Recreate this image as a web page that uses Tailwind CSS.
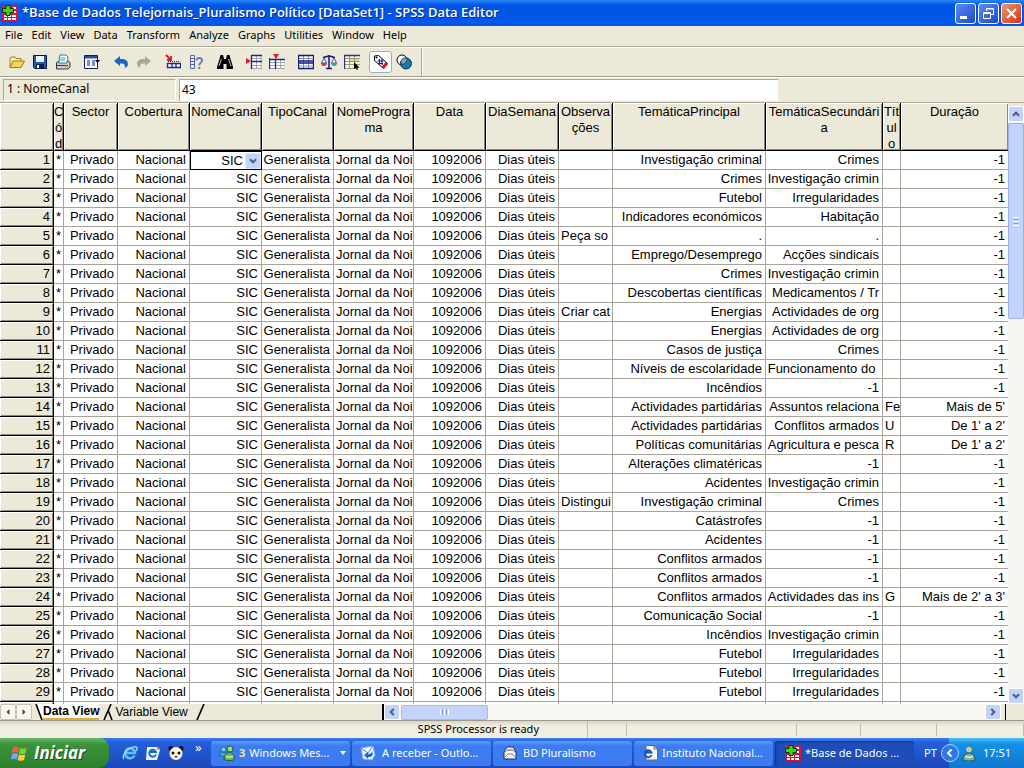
<!DOCTYPE html>
<html lang="pt">
<head>
<meta charset="utf-8">
<title>Base de Dados Telejornais - SPSS Data Editor</title>
<script src="https://cdn.jsdelivr.net/npm/@tailwindcss/browser@4"></script>
</head>
<body class="flex h-screen flex-col overflow-hidden bg-[#ece9d8] font-['Noto_Sans',sans-serif] text-[11px] text-black">

<svg class="hidden" aria-hidden="true">
  <symbol id="spss" viewBox="0 0 16 16">
    <rect width="16" height="16" fill="#d8143c"/>
    <path d="M2 10h3v2H2zM6 10h3v2H6zM10 10h4v2h-4zM2 13h3v2H2zM6 13h3v2H6zM10 13h4v2h-4zM11 6h3v2h-3zM11 2h3v2h-3z" fill="#fff"/>
    <path d="M4 0.500h4v3h3.500v4H8v3H4v-3H0.500v-4H4z" fill="#3fd41c" stroke="#063c06"/>
  </symbol>
  <symbol id="ie" viewBox="0 0 16 16">
    <path d="M12.500 10.500A5 5 0 1 1 13 8H4" fill="none" stroke="#5cc0f8" stroke-width="2.600"/>
    <path d="M2 14C-1 11 7 1 14 2c2 .5 1 3-.5 4" fill="none" stroke="#a4e0ff" stroke-width="1.300"/>
  </symbol>
  <symbol id="up" viewBox="0 0 16 16"><path d="M4.500 10 8 6.500l3.500 3.500" fill="none" stroke="#4d6185" stroke-width="2.400"/></symbol>
  <symbol id="down" viewBox="0 0 16 16"><path d="M4.500 6 8 9.500 11.500 6" fill="none" stroke="#4d6185" stroke-width="2.400"/></symbol>
  <symbol id="left" viewBox="0 0 16 16"><path d="M10 4.500 6.500 8l3.500 3.500" fill="none" stroke="#4d6185" stroke-width="2.400"/></symbol>
  <symbol id="right" viewBox="0 0 16 16"><path d="M6 4.500 9.500 8 6 11.500" fill="none" stroke="#4d6185" stroke-width="2.400"/></symbol>
  <symbol id="buddy" viewBox="0 0 16 16">
    <path d="M2 15c0-4 3-7 6-7s6 3 6 7c-3 1.300-9 1.300-12 0z" fill="#7fb0a4" stroke="#26584c"/>
    <circle cx="8" cy="4.500" r="3.500" fill="#a4d0c4" stroke="#3a7464"/>
    <path d="M4 11c2 1.500 6 1.500 8 0" stroke="#e0f0e8" stroke-width="1.500" fill="none"/>
  </symbol>
  <symbol id="buddies" viewBox="0 0 16 16">
    <circle cx="4.500" cy="4.500" r="2.500" fill="#8ccce8" stroke="#206890"/>
    <path d="M.5 11C.5 8 3 6.500 6 7.500l2 4z" fill="#58a8d0" stroke="#206890"/>
    <circle cx="11" cy="4" r="3" fill="#98d880" stroke="#206030"/>
    <path d="M5 14.500c0-4 2.500-7 5.500-7s5 3 5 7c-3 1.500-8 1.500-10.500 0z" fill="#60b858" stroke="#206030"/>
    <path d="M7 11c2 1.500 5 1.500 7 0" stroke="#d8f4d0" stroke-width="1.500" fill="none"/>
  </symbol>
</svg>

<header class="flex h-[26px] shrink-0 items-center bg-linear-to-b from-[#2a86f8] via-[#0054e3] via-20% to-[#0458ee] px-0.5">
  <svg class="size-4 shrink-0"><use href="#spss"/></svg>
  <h1 class="ml-1 grow whitespace-nowrap font-['Open_Sans',sans-serif] text-[13px] font-semibold text-white [text-shadow:1px_1px_#0a2a80]">*Base de Dados Telejornais_Pluralismo Político [DataSet1] - SPSS Data Editor</h1>
  <div class="flex gap-0.5">
    <button aria-label="Minimize" class="size-[21px] rounded-[3px] border border-white bg-linear-to-br from-[#5a8cf4] to-[#1c48cc]"><svg viewBox="0 0 19 19"><path d="M4 12h7v3H4z" fill="#fff"/></svg></button>
    <button aria-label="Restore" class="size-[21px] rounded-[3px] border border-white bg-linear-to-br from-[#5a8cf4] to-[#1c48cc]"><svg viewBox="0 0 19 19" fill="none" stroke="#fff"><path d="M7.500 7V4.500h7v6H12M7 5h8"/><path d="M4.500 8.500h7v6h-7zM4 9.500h8"/></svg></button>
    <button aria-label="Close" class="size-[21px] rounded-[3px] border border-white bg-linear-to-br from-[#f09070] to-[#cc3010]"><svg viewBox="0 0 19 19"><path d="m5 5 9 9M14 5l-9 9" stroke="#fff" stroke-width="2.200"/></svg></button>
  </div>
</header>

<nav class="flex h-[21px] shrink-0 items-center gap-[9px] border-b border-[#aca899] pl-[5px] pb-0.5">
  <button>File</button><button>Edit</button><button>View</button><button>Data</button><button>Transform</button><button>Analyze</button><button>Graphs</button><button>Utilities</button><button>Window</button><button>Help</button>
</nav>

<div class="flex h-[30px] shrink-0 items-center border-t border-b border-t-white border-b-[#9d9a8c] pl-[5px]">
  <button aria-label="Open" class="flex h-[22px] w-[23px] items-center justify-center"><svg class="size-4" viewBox="0 0 16 16"><path d="M1 13V4l1-1h4l1 1.500h5V7" fill="#fff2a8" stroke="#a07818"/><path d="M1 13.500 4 7h11.500L12 13.500z" fill="#f8d458" stroke="#a07818"/></svg></button>
  <button aria-label="Save" class="flex h-[22px] w-[23px] items-center justify-center"><svg class="size-4" viewBox="0 0 16 16"><path d="M1.500 1.500h13v13h-12l-1-1z" fill="#1c5cb4" stroke="#04145c"/><path d="M4 2h8v6H4z" fill="#e8f4ff"/><path d="M4 10h8v4H4z" fill="#102048"/><path d="M5 11h2v3H5z" fill="#fff"/></svg></button>
  <button aria-label="Print" class="flex h-[22px] w-[23px] items-center justify-center"><svg class="size-4" viewBox="0 0 16 16"><path d="M1.500 8.500 4 7h9l2 1.500V13l-2 2H1.500z" fill="#c8ccd0" stroke="#383c44"/><path d="M5 1h6l2 2-1 6H3.500z" fill="#f0fcff" stroke="#387890"/><path d="M5.500 4h5M5 6h5" stroke="#50a0b0"/><path d="M2 11.500h11" stroke="#383c44"/><path d="M10 12.500h3" stroke="#e8b018" stroke-width="1.500"/></svg></button>
  <button aria-label="Dialog recall" class="ml-1.5 flex h-[22px] w-[23px] items-center justify-center"><svg class="size-4" viewBox="0 0 16 16"><path d="M.5 1.500h13v13H.5z" fill="#fff" stroke="#101c70"/><path d="M1 2h12v2.500H1z" fill="#2850b0"/><path d="M3 6h3v6H3zM8 6h3v6H8z" fill="#7890d0"/><path d="M11 6h5l-2.500 3z" fill="#000"/></svg></button>
  <button aria-label="Undo" class="ml-1.5 flex h-[22px] w-[23px] items-center justify-center"><svg class="size-4" viewBox="0 0 16 16"><path d="m1 7 6-5v3c5-.5 8 1.500 8 5 0 2-1 3-3.500 4 1.200-3.500-.5-5-4.500-4.500V12z" fill="#1868c0"/></svg></button>
  <button aria-label="Redo" class="flex h-[22px] w-[23px] items-center justify-center"><svg class="size-4" viewBox="0 0 16 16"><path d="M15 7 9 2v3C4 4.500 1 6.500 1 10c0 2 1 3 3.500 4C3.300 10.500 5 9 9 9.500V12z" fill="#aaa798"/></svg></button>
  <button aria-label="Go to case" class="ml-1.5 flex h-[22px] w-[23px] items-center justify-center"><svg class="size-4" viewBox="0 0 16 16"><path d="m1 1 4 4M6 2v4H2" fill="none" stroke="#d01c30" stroke-width="1.800"/><path d="M2.500 9.500h13v4h-13zM7 9v5M11 9v5" fill="#fff" stroke="#182898" stroke-width="1.300"/><path d="M3 7.500h12" stroke="#182898" stroke-dasharray="1 1"/></svg></button>
  <button aria-label="Variables" class="flex h-[22px] w-[23px] items-center justify-center"><svg class="size-4" viewBox="0 0 16 16"><path d="M2.500 1.500h4v13h-4zM2 4.500h5M2 7.500h5M2 10.500h5" fill="#e8ecff" stroke="#5864a8"/><path d="M8.500 6.500C8.500 3 14 3.500 14 6.500c0 2.500-2.800 2-2.800 5M11.200 13v2" fill="none" stroke="#7080b4" stroke-width="2"/></svg></button>
  <button aria-label="Find" class="ml-1.5 flex h-[22px] w-[23px] items-center justify-center"><svg class="size-4" viewBox="0 0 16 16"><path d="M3.500 1H6l1 4h2l1-4h2.500l1 4L16 13v2H9.500v-5h-3v5H0v-2l2.500-8z" fill="#000"/><path d="M4.500 5 2 12M11.500 5l2.500 7" stroke="#fff" stroke-width=".8"/></svg></button>
  <button aria-label="Insert case" class="ml-1.5 flex h-[22px] w-[23px] items-center justify-center"><svg class="size-4" viewBox="0 0 16 16"><path d="M5.500 1.500h10v13h-10z" fill="#fff"/><path d="M10.500 1v14M15 1v14M5 4.500h11M5 11.500h11M5 14.500h11" stroke="#a0a4b4"/><path d="M5.500 1v14M5 1.500h11M6 7.500h10" stroke="#1c2880" stroke-width="1.300"/><path d="m0 4 5 3-5 3z" fill="#e01830"/></svg></button>
  <button aria-label="Insert variable" class="flex h-[22px] w-[23px] items-center justify-center"><svg class="size-4" viewBox="0 0 16 16"><path d="M1 5h14v10H1z" fill="#fff"/><path d="M1 8.500h15M1 11.500h15M1 14.500h15M11.500 5v10" stroke="#a0a4b4"/><path d="M.5 4v11M0 5.500h16M6.500 5v10" stroke="#1c2880" stroke-width="1.300"/><path d="M4 0h6L7 5z" fill="#e01830"/></svg></button>
  <button aria-label="Split file" class="ml-1.5 flex h-[22px] w-[23px] items-center justify-center"><svg class="size-4" viewBox="0 0 16 16"><path d="M.5 1h15v14H.5z" fill="#fff"/><path d="M5.500 1v14M10.500 1v14M0 4.500h16M0 12h16" stroke="#8890b4"/><path d="M.5 1v14M15.500 1v14M0 1.500h16M0 7h16M0 9h16M0 14.500h16" stroke="#101c80" stroke-width="1.300"/></svg></button>
  <button aria-label="Weight cases" class="flex h-[22px] w-[23px] items-center justify-center"><svg class="size-4" viewBox="0 0 16 16" fill="none"><path d="M8 1v13M2 3.500c3 0 3-2 6-1 3-1 3 1 6 1M5 14.500h6" stroke="#101c80" stroke-width="1.500"/><path d="M3 4 .5 9h5zM13 4l-2.500 5h5z" stroke="#4858a0" fill="#fff"/><path d="M0 9h6c0 4-6 4-6 0z" fill="#d83048"/><path d="M10 9h6c0 4-6 4-6 0z" fill="#30a0c0"/></svg></button>
  <button aria-label="Select cases" class="flex h-[22px] w-[23px] items-center justify-center"><svg class="size-4" viewBox="0 0 16 16"><path d="M.5 1h15v14H.5z" fill="#f8f6e0"/><path d="M5 4h10v3H5z" fill="#e0d890"/><path d="M5.500 1v14M10.500 1v14M0 4.500h16M0 7.500h16M0 10.500h16M0 14.500h12" stroke="#98967c"/><path d="M.5 1v14M0 1.500h16" stroke="#303870" stroke-width="1.300"/><path d="m10 8 5.500 5.500-2 .3.500 1.700-1.300.3-.7-1.800-2 1z" fill="#000"/></svg></button>
  <button aria-label="Value labels" aria-pressed="true" class="ml-1.5 flex h-[22px] w-[23px] items-center justify-center rounded-[3px] border border-[#9cb0c4] bg-white"><svg class="size-4 shrink-0" viewBox="0 0 16 16"><path d="m1.500 2 4-.5 9 8-4 5-9-8z" fill="#fff" stroke="#000"/><path d="m12.500 8 2.500 2-4 5-2.500-2z" fill="#d81c20"/><path d="M4.500 7h6M5 9.500h5M6.500 5v6M9 5v6" stroke="#182890" stroke-width="1.200"/><circle cx="3.500" cy="3.500" r="1" fill="#000"/></svg></button>
  <button aria-label="Use sets" class="flex h-[22px] w-[23px] items-center justify-center"><svg class="size-4" viewBox="0 0 16 16"><circle cx="6" cy="6" r="5" fill="#fff" stroke="#000"/><circle cx="10" cy="9.500" r="5.500" fill="#1878a8" stroke="#083858"/><path d="M5 7c1-3 4-3.500 6-2.500 0 3-2 5.500-5.500 6z" fill="#90a8b0" stroke="#083858" stroke-width=".7"/></svg></button>
  <span class="ml-1.5 h-full border-r border-l border-r-white border-l-[#aca899]"></span>
</div>

<div class="flex h-[25px] shrink-0 items-center border-t border-white text-[12px]">
  <output id="cell" class="ml-[3px] flex h-[22px] w-[173px] items-center border border-[#aca899] border-r-white border-b-white pb-0.5 pl-[3px]">1 : NomeCanal</output>
  <input aria-labelledby="cell" value="43" class="ml-[3px] h-[22px] min-w-0 max-w-[599px] grow border-t border-l border-[#aca899] bg-white pb-0.5 pl-0.5 outline-none">
</div>

<main class="flex min-h-0 grow border-t border-[#aca899] font-['Liberation_Sans',sans-serif] text-[13px]">
  <div class="min-w-0 grow overflow-hidden bg-white">
    <table class="w-full table-fixed border-separate border-spacing-0">
      <colgroup>
        <col class="w-[54px]"><col class="w-[10px]"><col class="w-[54px]"><col class="w-[72px]"><col class="w-[72px]"><col class="w-[72px]"><col class="w-[80px]"><col class="w-[72px]"><col class="w-[73px]"><col class="w-[54px]"><col class="w-[153px]"><col class="w-[117px]"><col class="w-[18px]"><col>
      </colgroup>
      <thead><tr id="head"></tr></thead>
      <tbody id="rows"></tbody>
    </table>
  </div>
  <div class="flex w-4 shrink-0 flex-col bg-[#f6f5f0]">
    <div class="h-[3px] bg-[#ece9d8]"></div>
    <button aria-label="Scroll up" class="size-4 rounded-[2px] border border-white bg-[#c4d3fb]"><svg viewBox="0 0 16 16"><use href="#up"/></svg></button>
    <div class="mt-px flex h-[196px] flex-col items-center justify-center gap-px rounded-[2px] border border-[#98b0e8] bg-[#c4d3fc]">
      <span class="h-px w-1.5 bg-white"></span><span class="h-px w-1.5 bg-[#8ca4e0]"></span><span class="h-px w-1.5 bg-white"></span><span class="h-px w-1.5 bg-[#8ca4e0]"></span><span class="h-px w-1.5 bg-white"></span>
    </div>
    <button aria-label="Scroll down" class="mt-auto size-4 rounded-[2px] border border-white bg-[#c4d3fb]"><svg viewBox="0 0 16 16"><use href="#down"/></svg></button>
  </div>
</main>

<div class="flex h-4 shrink-0 items-center font-['Liberation_Sans',sans-serif] text-[12px]">
  <button aria-label="Previous tab" class="flex size-4 items-center justify-center rounded-[2px] border border-[#c8c4b4] bg-[#f8f7f2]"><svg class="size-2" viewBox="0 0 8 8"><path d="M5.500 1v6l-3-3z" fill="#444"/></svg></button>
  <button aria-label="Next tab" class="flex size-4 items-center justify-center rounded-[2px] border border-[#c8c4b4] bg-[#f8f7f2]"><svg class="size-2" viewBox="0 0 8 8"><path d="M2.500 1v6l3-3z" fill="#444"/></svg></button>
  <svg class="ml-[3px] h-4 w-2" viewBox="0 0 8 16"><path d="M1 0h7v16z" fill="#fff"/><path d="m1 0 6 16" stroke="#000" stroke-width="1.600"/></svg>
  <button class="h-4 border-b-2 border-[#eaa83c] bg-white leading-[14px] font-bold">Data View</button>
  <svg class="ml-1 h-4 w-3" viewBox="0 0 12 16"><path d="M8 0 1 16M5 6l4 10" fill="none" stroke="#000" stroke-width="1.600"/></svg>
  <button class="h-4 leading-4">Variable View</button>
  <svg class="ml-2 h-4 w-3" viewBox="0 0 12 16"><path d="M8 0 1 16" stroke="#000" stroke-width="1.600"/></svg>
  <div class="ml-auto flex h-4 w-[642px] items-center border-l-2 border-black bg-[#f8f7f2]">
    <button aria-label="Scroll left" class="size-4 rounded-[2px] border border-white bg-[#c4d3fb]"><svg viewBox="0 0 16 16"><use href="#left"/></svg></button>
    <div class="ml-px flex h-[15px] w-[87px] items-center justify-center gap-px rounded-[2px] border border-[#a8bcec] bg-[#c4d3fc]">
      <span class="h-1.5 w-px bg-white"></span><span class="h-1.5 w-px bg-[#8ca4e0]"></span><span class="h-1.5 w-px bg-white"></span><span class="h-1.5 w-px bg-[#8ca4e0]"></span><span class="h-1.5 w-px bg-white"></span>
    </div>
    <button aria-label="Scroll right" class="ml-auto size-4 rounded-[2px] border border-white bg-[#c4d3fb]"><svg viewBox="0 0 16 16"><use href="#right"/></svg></button>
    <span class="h-4 w-[23px] border-l-4 border-[#ece9d8] bg-[#ece9d8]"><span class="block h-4 w-px bg-black"></span></span>
  </div>
</div>

<div role="status" class="flex h-[18px] shrink-0 items-center border-t border-[#9d9a8c] bg-linear-to-b from-[#d8d5c4] to-[#f0eee2] to-30%">
  <span class="w-[588px] border-r border-[#c0bcaa] pr-12 text-right">SPSS Processor is ready</span>
  <span class="h-3 w-[39px] border-r border-[#c0bcaa]"></span>
  <span class="h-3 grow border-r border-[#c0bcaa]"></span>
  <span class="h-3 w-16 border-r border-[#c0bcaa]"></span>
  <span class="h-3 w-[76px] border-r border-[#c0bcaa]"></span>
  <span class="h-3 w-[87px] border-r border-[#c0bcaa]"></span>
</div>

<footer class="flex h-[30px] shrink-0 items-center bg-linear-to-b from-[#3a80f0] via-[#245edc] via-15% to-[#1c48b8] text-white">
  <button class="flex h-full w-[109px] shrink-0 items-center gap-1.5 rounded-r-[10px] bg-linear-to-b from-[#68b868] via-[#3c943c] via-20% to-[#2c802c] pl-[11px] font-['Open_Sans',sans-serif] text-[17px] font-bold italic [text-shadow:1px_1px_#1c4c1c]">
    <svg class="size-[17px]" viewBox="0 0 17 17"><path d="M2 2.500c2.500-1.500 4-1 6 0L7 8C5 7 3 7 1 8z" fill="#f06030"/><path d="M9 3c2 1 4 1 6.500 0l-1.200 5.500c-2.300 1-4.300 1-6.300 0z" fill="#80d030"/><path d="M1 9c2-1 4-1 6 0l-1.200 5.500c-2-1-4-1-5.800 0z" fill="#70a8ff"/><path d="M8 9.500c2 1 4 1 6.300 0L13 15c-2 1-4.300 1-6.300 0z" fill="#ffd030"/></svg>Iniciar
  </button>
  <div class="flex w-[102px] shrink-0 items-center gap-[7px] pl-[13px]">
    <button aria-label="Internet Explorer"><svg class="size-4"><use href="#ie"/></svg></button>
    <button aria-label="Outlook Express"><svg class="size-4" viewBox="0 0 16 16"><path d="M2 2h11l2 3-3 10H1z" fill="#e8f4ff"/><path d="M11 9.500A3.500 3.500 0 1 1 11 7H5" fill="none" stroke="#1868c8" stroke-width="1.800"/><path d="m12 1 3 3-3 1z" fill="#e07028"/></svg></button>
    <button aria-label="Panda"><svg class="size-4" viewBox="0 0 16 16"><circle cx="3" cy="3.500" r="2.500" fill="#181010"/><circle cx="13" cy="3.500" r="2.500" fill="#181010"/><ellipse cx="8" cy="8.500" rx="6.500" ry="6.500" fill="#fff4ec"/><circle cx="5" cy="8" r="1.500" fill="#181010"/><circle cx="11" cy="8" r="1.500" fill="#181010"/><path d="M6.500 11h3L8 13z" fill="#181010"/></svg></button>
    <button aria-label="More" class="-mt-3 ml-1 text-[13px] leading-none">»</button>
  </div>
  <div class="grid min-w-0 grow grid-cols-5 gap-0.5">
    <button class="flex h-[25px] min-w-0 items-center gap-1 rounded-[3px] bg-linear-to-b from-[#5c9cfc] to-[#3c7cf0] to-20% pr-1 pl-2 whitespace-nowrap"><svg class="size-4 shrink-0"><use href="#buddies"/></svg><span class="font-bold text-[#ffe080]">3</span><span class="grow text-left">Windows Mes...</span><svg class="size-1.5" viewBox="0 0 6 6"><path d="M0 1h6L3 5z" fill="#fff"/></svg></button>
    <button class="flex h-[25px] min-w-0 items-center gap-1.5 rounded-[3px] bg-linear-to-b from-[#5c9cfc] to-[#3c7cf0] to-20% pl-2 whitespace-nowrap"><svg class="size-4 shrink-0" viewBox="0 0 16 16"><path d="m1 3 12-2 2 9-3 5-9-1z" fill="#e8f4ff" stroke="#88b0e0"/><path d="m1 3 7 5 5-7" fill="none" stroke="#5888d0"/><path d="m4 10 4-3v2c3 0 4-1 4-3 2 4 0 6-4 6v2z" fill="#1868d8"/></svg>A receber - Outlo...</button>
    <button class="flex h-[25px] min-w-0 items-center gap-1.5 rounded-[3px] bg-linear-to-b from-[#5c9cfc] to-[#3c7cf0] to-20% pl-2.5 whitespace-nowrap"><svg class="size-3.5 shrink-0" viewBox="0 0 14 14"><path d="M1 6 4 1h6l3 5v7H1z" fill="#f4f4f0" stroke="#203060"/><path d="M1 7c3-4 9-4 12 0M1 12l4-4h4l4 4M4 4h6" fill="none" stroke="#888"/></svg>BD Pluralismo</button>
    <button class="flex h-[25px] min-w-0 items-center gap-1 rounded-[3px] bg-linear-to-b from-[#5c9cfc] to-[#3c7cf0] to-20% pl-2 whitespace-nowrap"><svg class="size-4 shrink-0" viewBox="0 0 16 16"><path d="M4 .5h8l3.500 3.500v11H4z" fill="#f8f8f0" stroke="#706858"/><path d="M12 0v4h4" fill="none" stroke="#706858"/><path d="M9.500 10A3.500 3.500 0 1 1 9.500 7.500H4" fill="none" stroke="#1850b8" stroke-width="1.800"/></svg>Instituto Nacional...</button>
    <button class="flex h-[25px] min-w-0 items-center gap-1 rounded-[3px] bg-[#1e4cb8] pl-2.5 whitespace-nowrap shadow-[inset_1px_1px_2px_#10307c]"><svg class="size-4 shrink-0"><use href="#spss"/></svg>*Base de Dados ...</button>
  </div>
  <div class="flex h-full w-[110px] shrink-0 items-center">
    <span class="w-[35px] pl-2.5">PT</span>
    <div class="flex h-full grow items-center bg-linear-to-b from-[#48c0f8] via-[#1490e8] via-20% to-[#1078d0]">
      <button aria-label="Show hidden icons" class="-ml-2 mr-0.5 size-[18px] rounded-full border border-[#a0d8ff] bg-[#2c78e8]"><svg viewBox="0 0 16 16"><path d="M9.500 4.500 6 8l3.500 3.500" fill="none" stroke="#fff" stroke-width="2"/></svg></button>
      <svg class="size-4"><use href="#buddy"/></svg>
      <time class="ml-1.5">17:51</time>
    </div>
  </div>
</footer>

<script>
const heads = ["", "C<br>ó<br>d", "Sector", "Cobertura", "NomeCanal", "TipoCanal", "NomeProgra<br>ma", "Data", "DiaSemana", "Observa<br>ções", "TemáticaPrincipal", "TemáticaSecundári<br>a", "Tít<br>ul<br>o", "Duração"];
document.getElementById("head").innerHTML = heads.map(h =>
  `<th class="group h-12 p-0 align-top"><div class="h-12 overflow-hidden border-r border-b border-black bg-[#ece9d8] pt-px text-center leading-4 font-normal whitespace-nowrap shadow-[inset_1px_1px_#fff,inset_-1px_-1px_#8c897c] group-last:border-r-0">${h}</div></th>`).join("");

const data = [
  ["", "Investigação criminal", "Crimes", "", "-1"],
  ["", "Crimes", "Investigação crimin", "", "-1"],
  ["", "Futebol", "Irregularidades", "", "-1"],
  ["", "Indicadores económicos", "Habitação", "", "-1"],
  ["Peça so", ".", ".", "", "-1"],
  ["", "Emprego/Desemprego", "Acções sindicais", "", "-1"],
  ["", "Crimes", "Investigação crimin", "", "-1"],
  ["", "Descobertas científicas", "Medicamentos / Tr", "", "-1"],
  ["Criar cat", "Energias", "Actividades de org", "", "-1"],
  ["", "Energias", "Actividades de org", "", "-1"],
  ["", "Casos de justiça", "Crimes", "", "-1"],
  ["", "Níveis de escolaridade", "Funcionamento do&nbsp;", "", "-1"],
  ["", "Incêndios", "-1", "", "-1"],
  ["", "Actividades partidárias", "Assuntos relaciona", "Fe", "Mais de 5'"],
  ["", "Actividades partidárias", "Conflitos armados", "U", "De 1' a 2'"],
  ["", "Políticas comunitárias", "Agricultura e pesca", "R", "De 1' a 2'"],
  ["", "Alterações climatéricas", "-1", "", "-1"],
  ["", "Acidentes", "Investigação crimin", "", "-1"],
  ["Distingui", "Investigação criminal", "Crimes", "", "-1"],
  ["", "Catástrofes", "-1", "", "-1"],
  ["", "Acidentes", "-1", "", "-1"],
  ["", "Conflitos armados", "-1", "", "-1"],
  ["", "Conflitos armados", "-1", "", "-1"],
  ["", "Conflitos armados", "Actividades das ins", "G", "Mais de 2' a 3'"],
  ["", "Comunicação Social", "-1", "", "-1"],
  ["", "Incêndios", "Investigação crimin", "", "-1"],
  ["", "Futebol", "Irregularidades", "", "-1"],
  ["", "Futebol", "Irregularidades", "", "-1"],
  ["", "Futebol", "Irregularidades", "", "-1"]
];
const right = t => `<td class="h-[19px] overflow-hidden border-r border-b border-[#a8a598] p-0 pr-[3px] text-right leading-[18px] whitespace-nowrap last:border-r-0">${t}</td>`;
const left = t => `<td class="h-[19px] overflow-hidden border-r border-b border-[#a8a598] p-0 pl-0.5 text-left leading-[18px] whitespace-nowrap">${t}</td>`;
const rowHead = n => `<th scope="row" class="h-[19px] border-r border-b border-black bg-[#ece9d8] p-0 pr-[3px] text-right leading-[18px] font-normal shadow-[inset_1px_1px_#fff,inset_-1px_-1px_#8c897c]">${n}</th>`;
const active = `<td class="h-[19px] p-0"><div class="flex h-[19px] items-center justify-end gap-0.5 border border-black bg-white">SIC<button aria-label="Choose value" class="size-4 border border-[#e0e8ff] bg-[#c4d3fb]"><svg viewBox="0 0 16 16"><use href="#down"/></svg></button></div></td>`;
const row = (n, d) => "<tr>" + rowHead(n) + left(d ? "*" : "") +
  (d ? right("Privado") + right("Nacional") + (n === 1 ? active : right("SIC")) + right("Generalista") + left("Jornal da Noi") + right("1092006") + right("Dias úteis") + left(d[0]) + right(d[1]) + right(d[2]) + left(d[3]) + right(d[4])
     : right("").repeat(12)) + "</tr>";
document.getElementById("rows").innerHTML = data.map((d, i) => row(i + 1, d)).join("") + row("", null);
</script>
</body>
</html>
